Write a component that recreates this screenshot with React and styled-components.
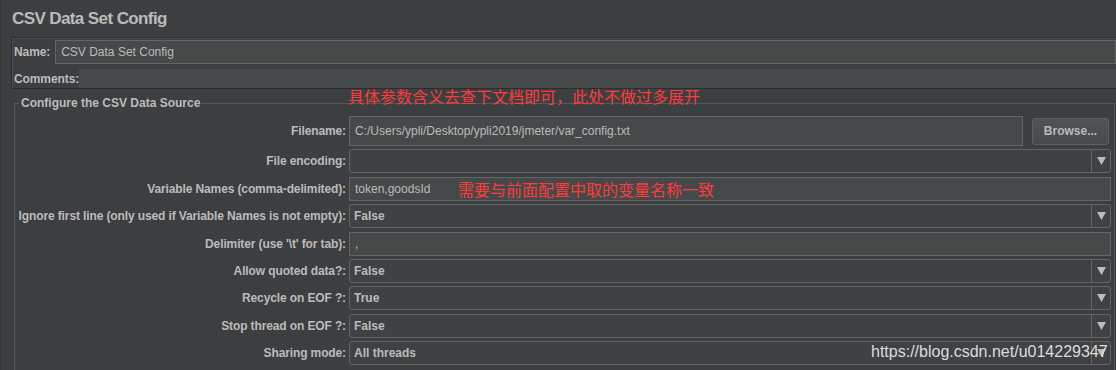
import React from "react";
import styled, { createGlobalStyle } from "styled-components";

const Global = createGlobalStyle`
  html, body { margin: 0; padding: 0; background: #3c3f41; }
  * { box-sizing: border-box; }
`;

const Page = styled.div`
  position: relative;
  width: 1116px;
  height: 370px;
  overflow: hidden;
  background: #3c3f41;
  font-family: "Liberation Sans", Arial, sans-serif;
  color: #bbbbbb;
  border-left: 1px solid #353739;
  padding-left: 1px;
`;

const Title = styled.h1`
  margin: 0;
  height: 37px;
  padding: 9px 0 0 10px;
  font-size: 17px;
  font-weight: bold;
  letter-spacing: -0.6px;
  color: #bbbbbb;
`;

const NamePanel = styled.div`
  margin-left: 9px;
  border: 1px solid #2b2d2e;
  border-right: none;
  box-shadow: inset 1px 1px 0 #4c4f51;
  padding: 2px 0 0 2px;
  height: 52px;
  display: flex;
  flex-direction: column;
  gap: 5px;
`;

const NameRow = styled.div`
  display: flex;
  align-items: center;
  gap: ${(p) => p.$gap}px;
  height: ${(p) => p.$h}px;
`;

const PanelLabel = styled.span`
  font-size: 12px;
  font-weight: bold;
  letter-spacing: -0.1px;
  white-space: nowrap;
`;

const TextField = styled.div`
  flex: 1;
  height: 100%;
  background: #45494a;
  border: 1px solid ${(p) => (p.$flat ? "#45494a" : "#646464")};
  display: flex;
  align-items: center;
  padding-left: ${(p) => (p.$flat ? 0 : 5)}px;
  font-size: 12px;
  color: #bbbbbb;
  white-space: nowrap;
`;

const Fieldset = styled.fieldset`
  margin: 7px 1px 0 12px;
  padding: 6px 3px 0 0;
  border: 1px solid #555859;
  border-bottom: none;
  height: 300px;
  min-width: 0;
`;

const Legend = styled.legend`
  margin-left: 4px;
  padding: 0 2px;
  font-size: 12px;
  font-weight: bold;
  color: #bbbbbb;
`;

const Form = styled.div`
  display: grid;
  grid-template-columns: 331px 1fr;
  column-gap: 3px;
  row-gap: 3.4px;
  align-items: center;
`;

const Label = styled.div`
  text-align: right;
  font-size: 12px;
  font-weight: bold;
  letter-spacing: -0.12px;
  white-space: nowrap;
  color: #bbbbbb;
`;

const Cell = styled.div`
  display: flex;
  gap: 9px;
  height: ${(p) => p.$h || 24}px;
  align-items: center;
`;

const Button = styled.div`
  width: 77px;
  height: 27px;
  margin-right: 2px;
  border: 1px solid #5e6060;
  border-radius: 3px;
  background: linear-gradient(#4f5355, #474b4d);
  display: flex;
  align-items: center;
  justify-content: center;
  font-size: 12px;
  font-weight: bold;
  color: #bbbbbb;
`;

const Combo = styled.div`
  flex: 1;
  height: 100%;
  display: flex;
  border: 1px solid #646464;
  border-radius: 3px;
  background: #3f4244;
`;

const ComboValue = styled.div`
  flex: 1;
  display: flex;
  align-items: center;
  padding-left: 4px;
  font-size: 12px;
  font-weight: bold;
  color: #bbbbbb;
`;

const ComboArrow = styled.div`
  width: 19px;
  border-left: 1px solid #646464;
  display: flex;
  align-items: center;
  justify-content: center;
`;

const Note = styled.div`
  position: absolute;
  left: ${(p) => p.$x}px;
  top: ${(p) => p.$y}px;
  font-family: "Noto Sans CJK SC", sans-serif;
  font-size: 16px;
  line-height: 18px;
  color: #ff3a3a;
  white-space: nowrap;
`;

const Watermark = styled.div`
  position: absolute;
  left: 870px;
  top: 342px;
  font-family: "Liberation Sans", Arial, sans-serif;
  font-size: 16px;
  line-height: 20px;
  color: rgba(235, 235, 235, 0.92);
  white-space: nowrap;
`;

const Arrow = () => (
  <svg width="9" height="8" viewBox="0 0 9 8">
    <path d="M0 0 H9 L4.5 8 Z" fill="#bbbbbb" />
  </svg>
);

const rows = [
  { label: "File encoding:", type: "combo", value: "" },
  { label: "Variable Names (comma-delimited):", type: "text", value: "token,goodsId" },
  { label: "Ignore first line (only used if Variable Names is not empty):", type: "combo", value: "False" },
  { label: "Delimiter (use '\\t' for tab):", type: "text", value: "," },
  { label: "Allow quoted data?:", type: "combo", value: "False" },
  { label: "Recycle on EOF ?:", type: "combo", value: "True" },
  { label: "Stop thread on EOF ?:", type: "combo", value: "False" },
  { label: "Sharing mode:", type: "combo", value: "All threads" },
];

export default function App() {
  return (
    <>
      <Global />
      <Page>
        <Title>CSV Data Set Config</Title>
        <NamePanel>
          <NameRow $h={25} $gap={5}>
            <PanelLabel>Name:</PanelLabel>
            <TextField>CSV Data Set Config</TextField>
          </NameRow>
          <NameRow $h={19} $gap={0}>
            <PanelLabel>Comments:</PanelLabel>
            <TextField $flat />
          </NameRow>
        </NamePanel>
        <Fieldset>
          <Legend>Configure the CSV Data Source</Legend>
          <Form>
            <Label>Filename:</Label>
            <Cell $h={30}>
              <TextField>C:/Users/ypli/Desktop/ypli2019/jmeter/var_config.txt</TextField>
              <Button>Browse...</Button>
            </Cell>
            {rows.map((r) => (
              <React.Fragment key={r.label}>
                <Label>{r.label}</Label>
                <Cell>
                  {r.type === "text" ? (
                    <TextField>{r.value}</TextField>
                  ) : (
                    <Combo>
                      <ComboValue>{r.value}</ComboValue>
                      <ComboArrow>
                        <Arrow />
                      </ComboArrow>
                    </Combo>
                  )}
                </Cell>
              </React.Fragment>
            ))}
          </Form>
        </Fieldset>
        <Note $x={347} $y={87}>具体参数含义去查下文档即可，此处不做过多展开</Note>
        <Note $x={457} $y={180}>需要与前面配置中取的变量名称一致</Note>
        <Watermark>https://blog.csdn.net/u014229347</Watermark>
      </Page>
    </>
  );
}
